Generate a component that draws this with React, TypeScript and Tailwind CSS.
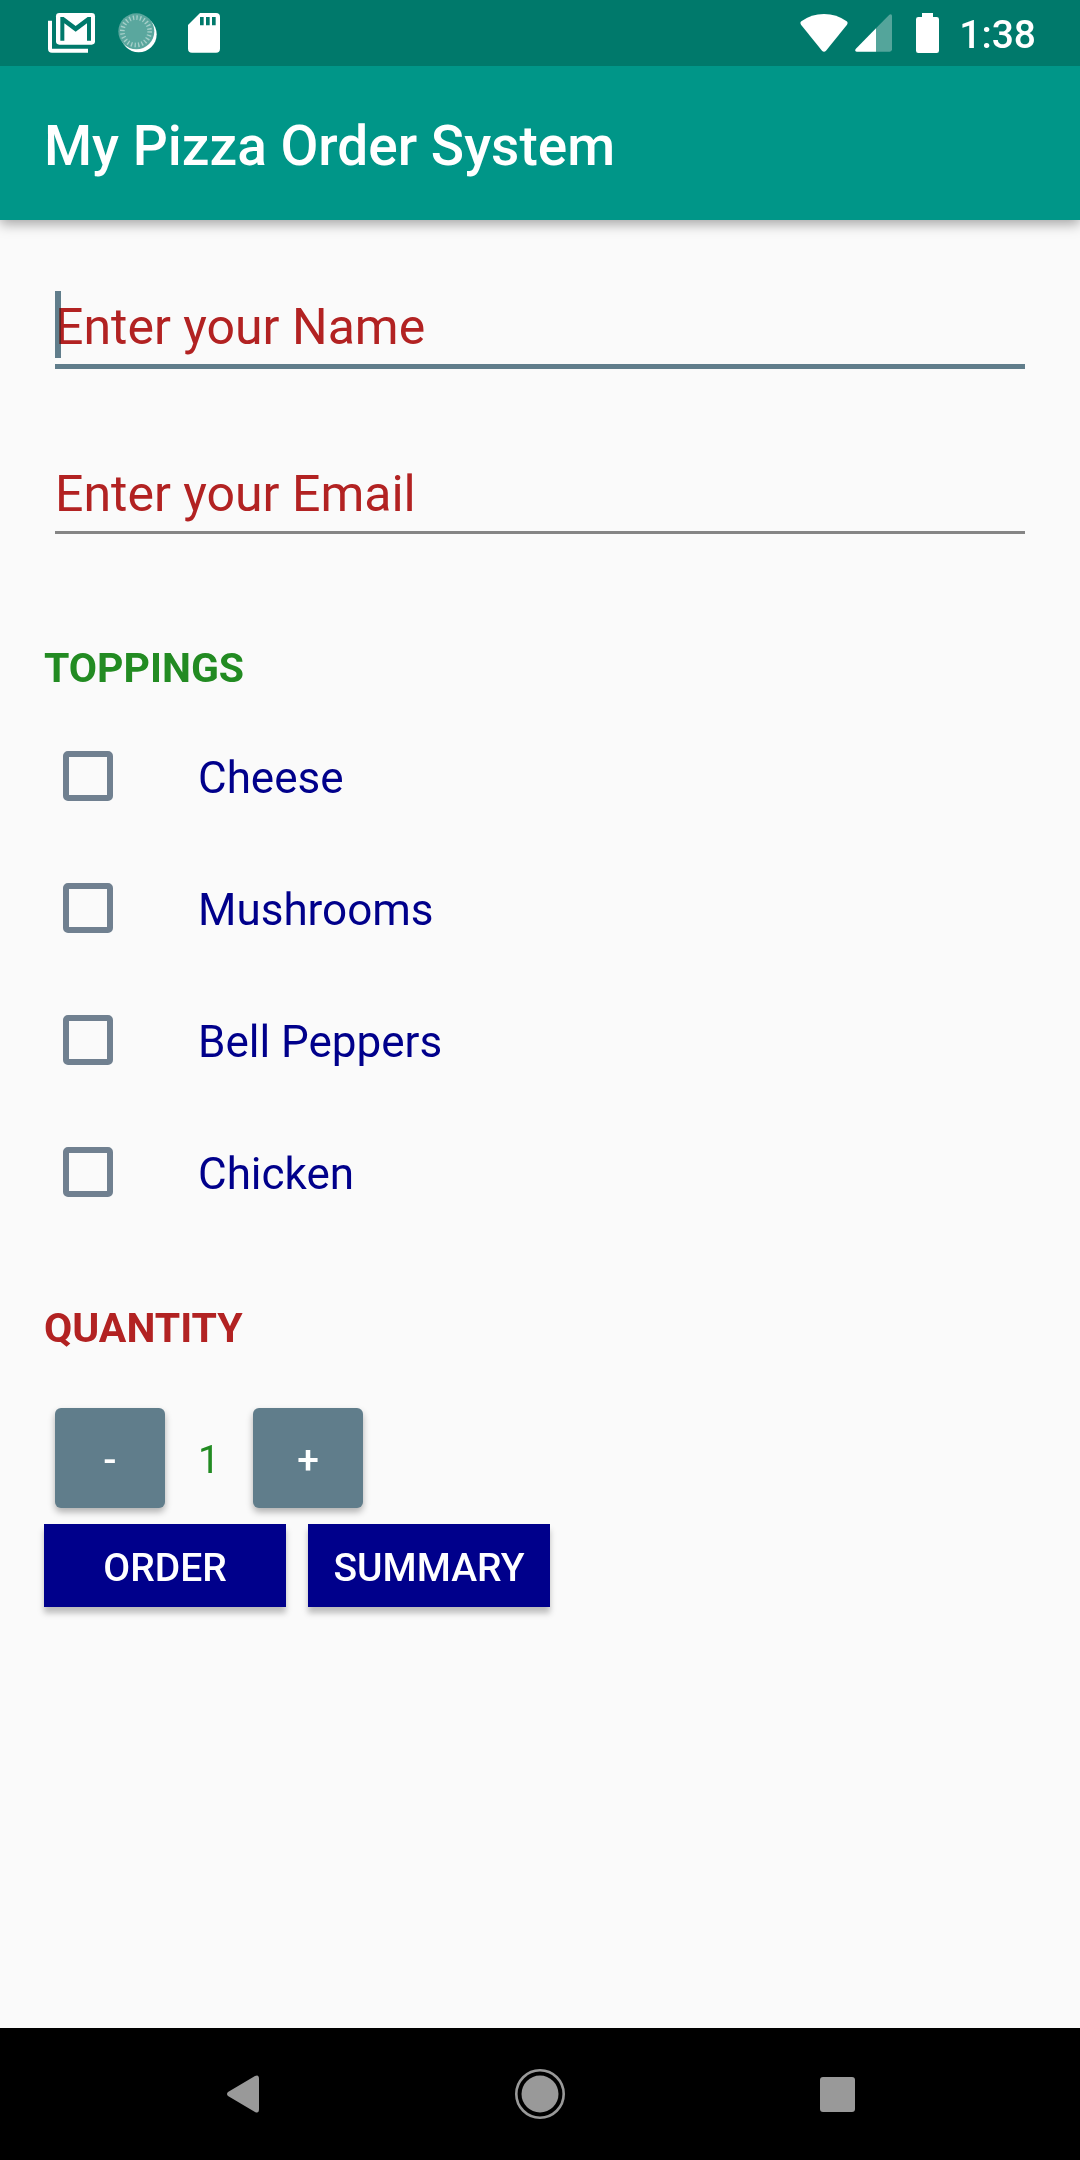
import { useState } from "react";

const toppings = ["Cheese", "Mushrooms", "Bell Peppers", "Chicken"];

function MailIcon() {
  return (
    <svg className="h-[42px] w-12" viewBox="0 0 144 126" aria-hidden="true">
      <path d="M0 26h12v84h108v12H12Q0 122 0 110z" fill="#fff" />
      <rect x="24" y="3" width="117" height="95" rx="10" fill="#fff" />
      <path
        d="M37 15h10L83 42L119 15h10V86H117V34L83 59L49 34V86H37z"
        fill="#00796b"
      />
    </svg>
  );
}

function SyncDialIcon() {
  return (
    <svg className="h-10 w-10" viewBox="0 0 120 120" aria-hidden="true">
      <circle cx="62" cy="64" r="54" fill="#fff" />
      <circle cx="55" cy="55" r="54" fill="#5aa79e" />
      <circle
        cx="54"
        cy="55"
        r="41"
        fill="none"
        stroke="#a5cfc9"
        strokeWidth="14"
        strokeDasharray="4 6.73"
      />
    </svg>
  );
}

function SdCardIcon() {
  return (
    <svg className="h-10 w-8" viewBox="0 0 96 120" aria-hidden="true">
      <path
        d="M36 0H84Q96 0 96 12V107Q96 119 84 119H12Q0 119 0 107V36z"
        fill="#fff"
      />
      <path d="M36 12h11v25H36zM54 12h11v25H54zM72 12h11v25H72z" fill="#00796b" />
    </svg>
  );
}

function WifiIcon() {
  return (
    <svg className="h-[39px] w-12" viewBox="0 0 144 117" aria-hidden="true">
      <path
        d="M4 22Q34 0 72 0T140 22Q145 26 141 32L78 110Q72 116 66 110L3 32Q-1 26 4 22z"
        fill="#fff"
      />
    </svg>
  );
}

function SignalIcon() {
  return (
    <svg className="h-[38px] w-[37px]" viewBox="0 0 111 114" aria-hidden="true">
      <path d="M63 43L103 2Q111-2 111 6V106Q111 113 104 113H63z" fill="#54a59b" />
      <path d="M63 43V113H5Q-2 112 2 105z" fill="#fff" />
    </svg>
  );
}

function BatteryIcon() {
  return (
    <svg className="h-10 w-[23px]" viewBox="0 0 69 120" aria-hidden="true">
      <path
        d="M18 0H51V12H62Q69 12 69 19V113Q69 120 62 120H7Q0 120 0 113V19Q0 12 7 12H18z"
        fill="#fff"
      />
    </svg>
  );
}

function StatusBar() {
  return (
    <div className="relative z-10 flex h-[66px] items-center justify-between bg-[#00796b] pr-11 pl-12">
      <div className="flex items-center">
        <MailIcon />
        <div className="ml-[22px]">
          <SyncDialIcon />
        </div>
        <div className="ml-[30px]">
          <SdCardIcon />
        </div>
      </div>
      <div className="flex items-center">
        <WifiIcon />
        <div className="ml-[7px]">
          <SignalIcon />
        </div>
        <div className="ml-6">
          <BatteryIcon />
        </div>
        <time className="ml-5 pt-1 text-[39px] leading-[46px] font-medium text-white">
          1:38
        </time>
      </div>
    </div>
  );
}

function NavigationBar() {
  return (
    <nav className="flex h-[132px] items-center justify-around bg-black px-[94px]">
      <button type="button" aria-label="Back" className="flex h-16 w-16 items-center justify-center">
        <svg className="h-[38px] w-8" viewBox="0 0 32 38" aria-hidden="true">
          <path d="M28 1Q32-1 32 4V34Q32 39 28 37L1 21Q-1 19 1 17z" fill="#999" />
        </svg>
      </button>
      <button type="button" aria-label="Home" className="flex h-16 w-16 items-center justify-center">
        <svg className="h-[50px] w-[50px]" viewBox="0 0 50 50" aria-hidden="true">
          <circle cx="25" cy="25" r="23.7" fill="none" stroke="#999" strokeWidth="2.6" />
          <circle cx="25" cy="25" r="18.5" fill="#999" />
        </svg>
      </button>
      <button type="button" aria-label="Recent apps" className="flex h-16 w-16 items-center justify-center">
        <span className="h-[35px] w-[35px] rounded-[3px] bg-[#999]" />
      </button>
    </nav>
  );
}

export default function App() {
  const [name, setName] = useState("");
  const [email, setEmail] = useState("");
  const [quantity, setQuantity] = useState(1);

  return (
    <div className="flex min-h-screen flex-col bg-[#fafafa] font-[Roboto,sans-serif]">
      <StatusBar />
      <header className="flex h-[154px] items-center bg-[#009688] px-11 pt-1.5 shadow-[0_4px_12px_rgba(0,0,0,0.35)]">
        <h1 className="text-[55px] leading-[64px] font-medium text-white">
          My Pizza Order System
        </h1>
      </header>

      <form
        className="flex flex-1 flex-col px-11 pt-[71px]"
        onSubmit={(event) => event.preventDefault()}
      >
        <div className="relative mx-[11px]">
          <input
            type="text"
            aria-label="Name"
            placeholder="Enter your Name"
            value={name}
            onChange={(event) => setName(event.target.value)}
            className="block h-[78px] w-full border-b-[5px] border-[#607d8b] bg-transparent pb-0.5 text-[50px] text-[#b22222] caret-transparent outline-none placeholder:text-[#b22222] placeholder:opacity-100"
          />
          <span className="absolute top-0 left-0 h-[67px] w-[6px] bg-[#607d8b] mix-blend-darken" />
        </div>
        <div className="mx-[11px] mt-[90px]">
          <input
            type="email"
            aria-label="Email"
            placeholder="Enter your Email"
            value={email}
            onChange={(event) => setEmail(event.target.value)}
            className="block h-[75px] w-full border-b-[3px] border-[#858585] bg-transparent pb-0.5 text-[50px] text-[#b22222] outline-none placeholder:text-[#b22222] placeholder:opacity-100"
          />
        </div>

        <h2 className="mt-[110px] text-[41px] leading-[48px] font-bold text-[#228b22]">
          TOPPINGS
        </h2>
        <div className="mt-[18px]">
          {toppings.map((topping) => (
            <label key={topping} className="flex h-[132px] items-center pl-[19px]">
              <input
                type="checkbox"
                className="h-[50px] w-[50px] appearance-none rounded-[5px] border-[6px] border-[#708090] checked:bg-[#708090]"
              />
              <span className="ml-[85px] pt-1 text-[44px] leading-[52px] text-[#00008b]">
                {topping}
              </span>
            </label>
          ))}
        </div>

        <h2 className="mt-[66px] text-[41px] leading-[48px] font-bold text-[#b22222]">
          QUANTITY
        </h2>
        <div className="mt-14 ml-[11px] flex items-center">
          <button
            type="button"
            aria-label="Decrease quantity"
            onClick={() => setQuantity(Math.max(1, quantity - 1))}
            className="h-[100px] w-[110px] rounded-[6px] bg-[#607d8b] pt-1 text-[39px] font-medium text-white shadow-[0_4px_7px_rgba(0,0,0,0.3)]"
          >
            -
          </button>
          <output className="w-[88px] pt-1 text-center text-[39px] leading-[46px] text-[#228b22]">
            {quantity}
          </output>
          <button
            type="button"
            aria-label="Increase quantity"
            onClick={() => setQuantity(quantity + 1)}
            className="h-[100px] w-[110px] rounded-[6px] bg-[#607d8b] pt-1 text-[39px] font-medium text-white shadow-[0_4px_7px_rgba(0,0,0,0.3)]"
          >
            +
          </button>
        </div>
        <div className="mt-4 flex gap-[22px]">
          <button
            type="submit"
            className="h-[83px] w-[242px] bg-[#00008b] pt-1.5 text-[39px] font-medium text-white shadow-[0_6px_6px_rgba(0,0,0,0.25)]"
          >
            ORDER
          </button>
          <button
            type="button"
            className="h-[83px] w-[242px] bg-[#00008b] pt-1.5 text-[39px] font-medium text-white shadow-[0_6px_6px_rgba(0,0,0,0.25)]"
          >
            SUMMARY
          </button>
        </div>
      </form>

      <NavigationBar />
    </div>
  );
}
